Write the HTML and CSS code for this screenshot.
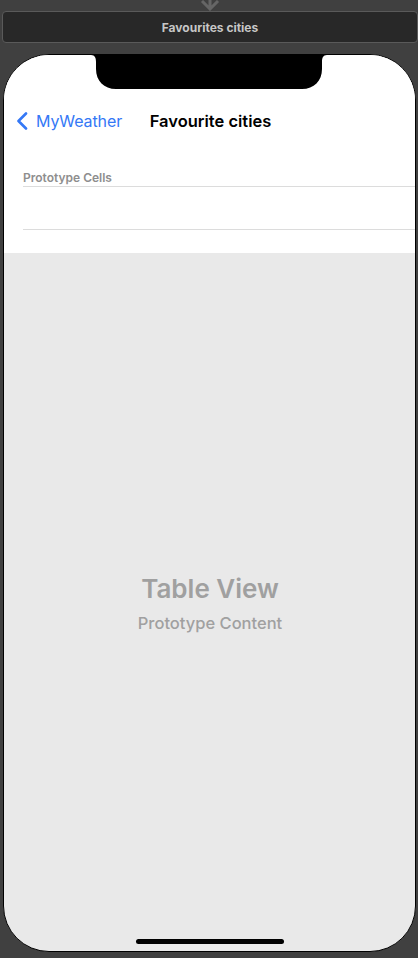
FILE: index.html
```html
<!DOCTYPE html>
<html lang="en">
<head>
    <meta charset="UTF-8">
    <meta name="viewport" content="width=device-width, initial-scale=1.0">
    <title>Favourites cities</title>
    <link rel="stylesheet" href="styles.css">
</head>
<body>

<div class="segue-arrow">
    <svg width="24" height="11" viewBox="0 0 24 11">
        <path d="M12 0 V9 M4 1 L12 9 L20 1" fill="none" stroke="#666" stroke-width="3"/>
    </svg>
</div>

<header class="scene-bar">
    <span>Favourites cities</span>
</header>

<div class="phone">
    <div class="phone-top">
        <div class="notch">
            <svg width="236" height="34" viewBox="0 0 236 34">
                <path d="M0 0 H236 C232 0 231 3 231 7 V14 C231 26 223 34 211 34 H25 C13 34 5 26 5 14 V7 C5 3 4 0 0 0 Z" fill="#000"/>
            </svg>
        </div>

        <nav class="nav-bar">
            <a class="back" href="#">
                <svg width="12" height="18" viewBox="0 0 12 18">
                    <path d="M10 1.5 L2.5 9 L10 16.5" fill="none" stroke="#3478f6" stroke-width="2.6" stroke-linecap="round" stroke-linejoin="round"/>
                </svg>
                <span>MyWeather</span>
            </a>
            <h1 class="nav-title">Favourite cities</h1>
        </nav>

        <div class="section-label">Prototype Cells</div>
        <div class="cell"></div>
    </div>

    <div class="table-area">
        <div class="placeholder">
            <div class="placeholder-title">Table View</div>
            <div class="placeholder-sub">Prototype Content</div>
        </div>
        <div class="home-indicator"></div>
    </div>
</div>

</body>
</html>
```

FILE: styles.css
```css
/* Reset */
* {
    box-sizing: border-box;
    margin: 0;
    padding: 0;
}

body {
    font-family: Inter, "Liberation Sans", sans-serif;
    background-color: #404040;
    height: 958px;
    overflow: hidden;
}

/* Flecha del segue */
.segue-arrow {
    display: flex;
    justify-content: center;
    height: 11px;
    padding-left: 2px;
}

/* Barra de la escena */
.scene-bar {
    margin: 0 0 0 2px;
    width: 416px;
    height: 32px;
    background-color: #282828;
    border: 1px solid #5a5a5a;
    border-radius: 4px;
    display: flex;
    align-items: center;
    justify-content: center;
}

.scene-bar span {
    color: #c6c6c6;
    font-size: 12px;
    font-weight: 700;
    padding-top: 1px;
}

/* Marco del teléfono */
.phone {
    margin: 11px 0 0 3px;
    width: 413px;
    height: 898px;
    border: 1px solid #000;
    border-radius: 46px;
    overflow: hidden;
    display: flex;
    flex-direction: column;
    background-color: #e9e9e9;
}

.phone-top {
    background-color: #fff;
    height: 198px;
}

.notch {
    display: flex;
    justify-content: center;
    height: 33px;
    padding-right: 1px;
}

.notch svg {
    display: block;
}

/* Barra de navegación */
.nav-bar {
    margin-top: 11px;
    height: 44px;
    display: flex;
    align-items: center;
    position: relative;
}

.back {
    display: flex;
    align-items: center;
    gap: 8px;
    padding-left: 12px;
    color: #3478f6;
    text-decoration: none;
    font-size: 16px;
    letter-spacing: -0.1px;
}

.back svg {
    display: block;
}

.nav-title {
    position: absolute;
    left: 0;
    right: 0;
    text-align: center;
    font-size: 16.5px;
    font-weight: 600;
    color: #000;
    padding-left: 2px;
    pointer-events: none;
}

/* Celdas */
.section-label {
    margin-left: 19px;
    padding-top: 28px;
    height: 44px;
    line-height: 14px;
    font-size: 12px;
    font-weight: 600;
    color: #8e8e8e;
    border-bottom: 1px solid #dcdcdc;
}

.cell {
    margin-left: 19px;
    height: 43px;
    border-bottom: 1px solid #dcdcdc;
}

/* Área de la tabla */
.table-area {
    flex: 1;
    display: flex;
    flex-direction: column;
    align-items: center;
}

.placeholder {
    margin-top: 320px;
    display: flex;
    flex-direction: column;
    align-items: center;
    color: #a0a0a0;
    padding-left: 1px;
}

.placeholder-title {
    font-size: 26px;
    font-weight: 600;
    line-height: 32px;
}

.placeholder-sub {
    font-size: 16.5px;
    font-weight: 500;
    line-height: 22px;
    margin-top: 7px;
}

.home-indicator {
    margin-top: auto;
    margin-bottom: 7px;
    width: 148px;
    height: 5px;
    border-radius: 3px;
    background-color: #000;
}
```
